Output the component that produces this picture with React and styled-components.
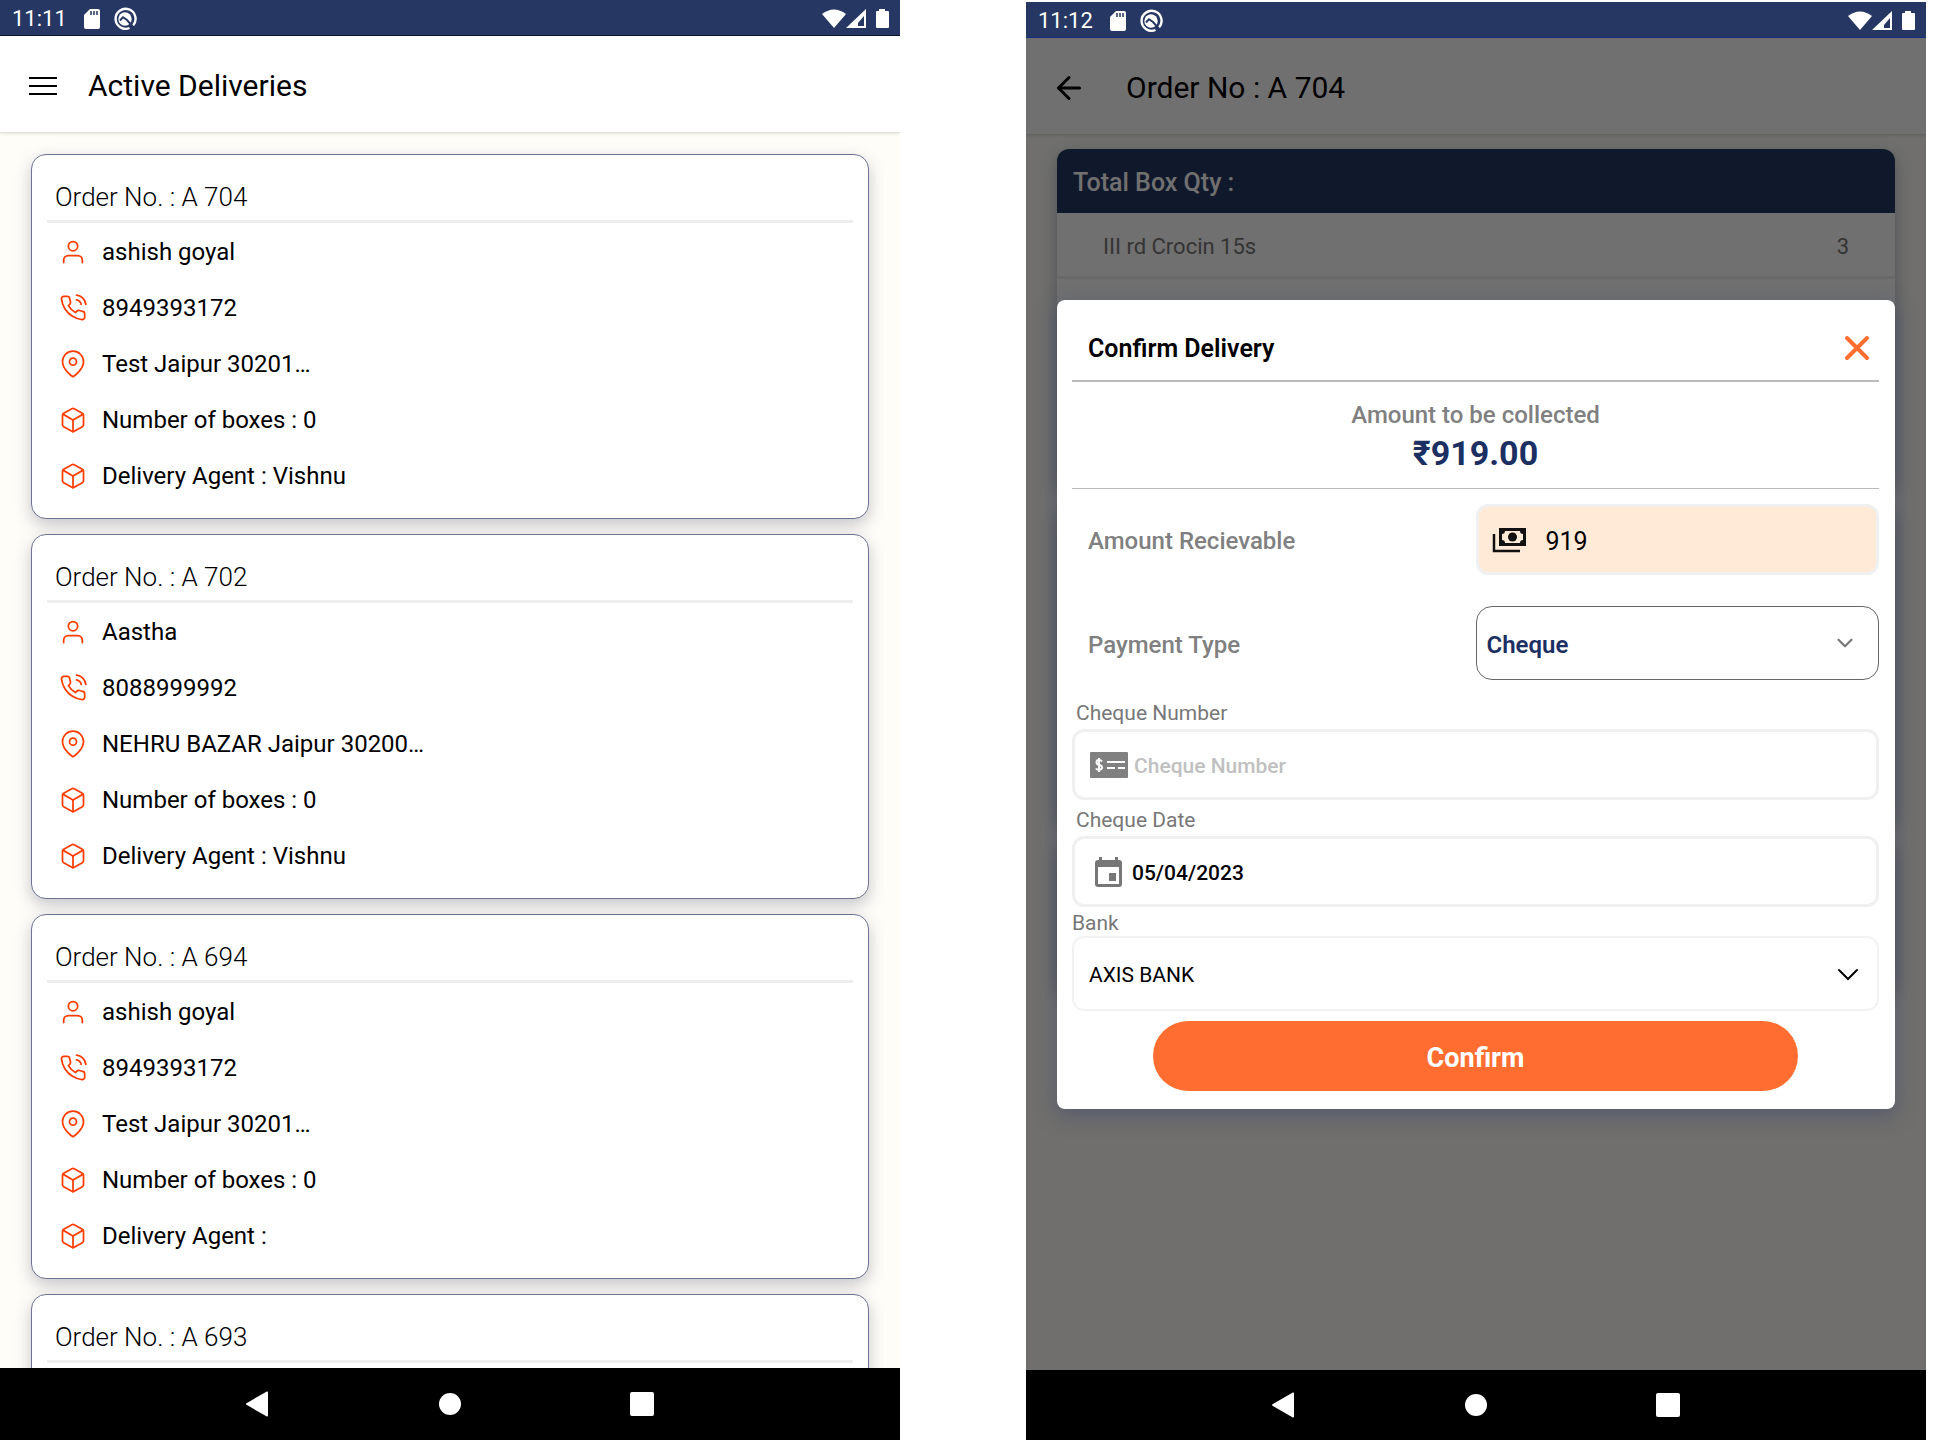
import React from "react";
import styled, { createGlobalStyle } from "styled-components";
import { FiUser, FiPhoneCall, FiMapPin, FiBox, FiArrowLeft, FiChevronDown } from "react-icons/fi";

const orders = [
    { id: "A 704", name: "ashish goyal", phone: "8949393172", address: "Test Jaipur 30201…", boxes: 0, agent: "Vishnu" },
    { id: "A 702", name: "Aastha", phone: "8088999992", address: "NEHRU BAZAR Jaipur 30200…", boxes: 0, agent: "Vishnu" },
    { id: "A 694", name: "ashish goyal", phone: "8949393172", address: "Test Jaipur 30201…", boxes: 0, agent: "" },
    { id: "A 693" },
];

const GlobalStyle = createGlobalStyle`
    * {
        box-sizing: border-box;
    }

    body {
        margin: 0;
        background: #fff;
        font-family: Roboto, "Liberation Sans", sans-serif;
        color: #000;
    }

    h1, h2, p, ul {
        margin: 0;
        padding: 0;
        font-weight: 400;
    }

    button, input, select {
        font-family: inherit;
    }
`

const Screens = styled.main`
    display: grid;
    grid-template-columns: 1fr 1fr;
    column-gap: 126px;
    padding-right: 26px;
    height: 100vh;
`

const Phone = styled.section`
    display: flex;
    flex-direction: column;
    min-width: 0;
    min-height: 0;
    margin-top: ${props => props.$top || 0}px;
`

const StatusBar = styled.div`
    display: flex;
    align-items: center;
    flex: none;
    height: 36px;
    padding: 2px 10px 0 12px;
    background: #253762;
    border-bottom: 1px solid ${props => props.$line};
    color: #fff;
    font-size: 22px;

    .icons {
        display: flex;
        align-items: center;
        gap: 11px;
        flex: 1;
        margin-left: 15px;
    }

    .signal {
        display: flex;
        align-items: center;
    }
`

const Body = styled.div`
    position: relative;
    display: flex;
    flex-direction: column;
    flex: 1;
    min-height: 0;
    overflow: hidden;
    background: #fefdf8;
`

const TopBar = styled.header`
    display: flex;
    align-items: center;
    gap: ${props => props.$gap}px;
    flex: none;
    height: 97px;
    padding: 3px ${props => props.$side}px 0;
    background: #fff;
    border-bottom: 1px solid #e4e4de;
    box-shadow: 0 1px 3px rgba(0, 0, 0, 0.1);

    h1 {
        font-size: 30px;
        font-weight: 450;
    }
`

const IconButton = styled.button`
    display: flex;
    padding: 0;
    border: 0;
    background: none;
    color: ${props => props.$color || "#000"};
`

const CardList = styled.ul`
    display: flex;
    flex-direction: column;
    gap: 15px;
    padding: 21px 31px 0;
    list-style: none;
`

const Card = styled.li`
    flex: none;
    min-height: 365px;
    padding: 0 15px 15px;
    background: #fff;
    border: 1px solid #6d7493;
    border-radius: 15px;
    box-shadow: 0 6px 16px rgba(37, 40, 70, 0.26);

    h2 {
        padding: 24px 8px 0;
        height: 68px;
        border-bottom: 3px solid #eee;
        font-size: 26px;
        line-height: 36px;
        font-weight: 350;
    }
`

const Detail = styled.p`
    display: flex;
    align-items: center;
    gap: 15px;
    height: 56px;
    padding: 2px 0 0 12px;
    font-size: 24px;
    font-weight: 370;

    svg {
        color: #ff3d00;
        stroke-width: 1.5;
    }
`

const NavBar = styled.nav`
    display: flex;
    align-items: center;
    justify-content: center;
    gap: 164px;
    flex: none;
    height: ${props => props.$height}px;
    background: #000;
`

const Sheets = styled.div`
    display: flex;
    flex-direction: column;
    gap: 16px;
    padding: 14px 31px;
`

const Sheet = styled.div`
    min-height: ${props => props.$height}px;
    background: #fff;
    border-radius: 12px;
    box-shadow: 0 6px 16px rgba(60, 70, 120, 0.4);
    overflow: hidden;

    h2 {
        height: 64px;
        padding: 0 16px;
        background: #253762;
        color: #fff;
        font-size: 25px;
        font-weight: 500;
        line-height: 68px;
    }
`

const Item = styled.p`
    display: flex;
    justify-content: space-between;
    height: 66px;
    padding: 0 46px;
    border-bottom: 3px solid #eee;
    color: #777;
    font-size: 22px;
    line-height: 68px;
`

const Overlay = styled.div`
    position: absolute;
    inset: 0;
    padding: 262px 31px 0;
    background: rgba(0, 0, 0, 0.56);
`

const Dialog = styled.form`
    padding: 0 16px 18px 15px;
    background: #fff;
    border-radius: 8px;
    box-shadow: 0 6px 20px rgba(60, 70, 110, 0.5);
`

const DialogHead = styled.div`
    display: flex;
    align-items: center;
    justify-content: space-between;
    height: 82px;
    padding: 16px 8px 0 16px;
    border-bottom: 2px solid #bbb;

    h2 {
        font-size: 25px;
        font-weight: 600;
    }
`

const Amount = styled.div`
    height: 107px;
    padding-top: 17px;
    border-bottom: 1px solid #bbb;
    color: #808080;
    font-size: 24px;
    font-weight: 500;
    line-height: 32px;
    text-align: center;

    strong {
        display: block;
        color: #1c2f63;
        font-size: 34px;
        font-weight: 700;
        line-height: 44px;
    }
`

const Row = styled.div`
    display: grid;
    grid-template-columns: 1fr 1fr;
    align-items: center;
    margin-top: ${props => props.$top}px;

    label {
        padding: 3px 0 0 16px;
        color: #808080;
        font-size: 24px;
        font-weight: 500;
    }
`

const Box = styled.div`
    display: flex;
    align-items: center;
    gap: ${props => props.$gap || 0}px;
    height: ${props => props.$height || 71}px;
    padding: ${props => props.$pad || "0 15px"};
    background: ${props => props.$fill || "#fff"};
    border: ${props => props.$border || "3px solid #f0f0f0"};
    border-radius: ${props => props.$radius || 12}px;

    svg {
        flex: none;
    }

    input, select {
        flex: 1;
        min-width: 0;
        height: 100%;
        padding: 3px 0 0;
        border: 0;
        outline: 0;
        background: none;
        appearance: none;
        color: #000;
        font-size: ${props => props.$size || 21}px;
        font-weight: ${props => props.$weight || 400};
    }

    select {
        color: ${props => props.$color || "#000"};
    }

    input::placeholder {
        color: #c0c0c0;
    }
`

const Label = styled.label`
    display: block;
    height: ${props => props.$height}px;
    padding: ${props => props.$pad};
    color: #777;
    font-size: 21px;
    line-height: 26px;
`

const Confirm = styled.button`
    display: block;
    width: 80%;
    height: 70px;
    margin: 10px auto 0;
    padding: 4px 0 0;
    border: 0;
    border-radius: 35px;
    background: #ff6e30;
    color: #fff;
    font-size: 27px;
    font-weight: 700;
`

function Status({ time, line }) {
    return <StatusBar $line={line}>
        <span>{time}</span>
        <div className="icons">
            <svg width="20" height="22" viewBox="0 0 20 22">
                <path fill="#fff" d="M8 1h8a2 2 0 0 1 2 2v16a2 2 0 0 1-2 2H4a2 2 0 0 1-2-2V7z" />
                <path stroke="#253762" strokeWidth="1.5" d="M9 3v4M12 3v4M15 3v4" />
            </svg>
            <svg width="24" height="24" viewBox="0 0 24 24" fill="none">
                <path stroke="#fff" strokeWidth="2.4" d="M20 18.500A10 10 0 1 0 16.500 21" />
                <circle cx="12" cy="12" r="6.700" fill="#fff" />
                <path stroke="#253762" strokeWidth="2" d="M7 13.500l3-3.300 4 2.800 7 8" />
            </svg>
        </div>
        <div className="signal">
            <svg width="70" height="24" viewBox="0 0 70 24">
                <path fill="#fff" d="M2 7q12-9 24 0L14 21z" />
                <path fill="#fff" fillRule="evenodd" d="M46 2v19H26zM44 9l-6 7v3h6z" />
                <path fill="#fff" d="M59 2h6v2h3a1 1 0 0 1 1 1v15a1 1 0 0 1-1 1H57a1 1 0 0 1-1-1V5a1 1 0 0 1 1-1h2z" />
            </svg>
        </div>
    </StatusBar>;
}

function AndroidNav({ height }) {
    return <NavBar $height={height}>
        <IconButton aria-label="Back" $color="#fff">
            <svg width="28" height="28" viewBox="0 0 28 28"><path fill="currentColor" d="M24 2.500v23a1 1 0 0 1-1.600.8L2.500 14.800a1 1 0 0 1 0-1.600L22.400 1.700a1 1 0 0 1 1.600.8z" /></svg>
        </IconButton>
        <IconButton aria-label="Home" $color="#fff">
            <svg width="28" height="28" viewBox="0 0 28 28"><circle cx="14" cy="14" r="11" fill="currentColor" /></svg>
        </IconButton>
        <IconButton aria-label="Recent apps" $color="#fff">
            <svg width="28" height="28" viewBox="0 0 28 28"><rect x="2" y="2" width="24" height="24" rx="2" fill="currentColor" /></svg>
        </IconButton>
    </NavBar>;
}

function OrderCard({ order }) {
    return <Card>
        <h2>Order No. : {order.id}</h2>
        {order.name && <>
            <Detail><FiUser size={28} />{order.name}</Detail>
            <Detail><FiPhoneCall size={28} />{order.phone}</Detail>
            <Detail><FiMapPin size={28} />{order.address}</Detail>
            <Detail><FiBox size={28} />Number of boxes : {order.boxes}</Detail>
            <Detail><FiBox size={28} />Delivery Agent : {order.agent}</Detail>
        </>}
    </Card>;
}

function ConfirmDelivery() {
    return <Dialog onSubmit={e => e.preventDefault()}>
        <DialogHead>
            <h2>Confirm Delivery</h2>
            <IconButton type="button" aria-label="Close" $color="#ff6e2e">
                <svg width="28" height="28" viewBox="0 0 28 28"><path stroke="currentColor" strokeWidth="4" strokeLinecap="round" d="M4 4l20 20M24 4L4 24" /></svg>
            </IconButton>
        </DialogHead>
        <Amount>
            Amount to be collected
            <strong>₹919.00</strong>
        </Amount>
        <Row $top={15}>
            <label htmlFor="amount">Amount Recievable</label>
            <Box $fill="#ffead7" $gap={20} $size={25} $pad="0 13px">
                <svg width="34" height="26" viewBox="0 0 34 26" fill="none">
                    <path stroke="#111" strokeWidth="2.500" d="M2 7v17h26" />
                    <path fill="#111" fillRule="evenodd" d="M7 1h27v18H7zM13 4a3 3 0 0 1-3 3v6a3 3 0 0 1 3 3h15a3 3 0 0 1 3-3V7a3 3 0 0 1-3-3z" />
                    <circle cx="20.500" cy="10" r="4.500" fill="#111" />
                </svg>
                <input id="amount" defaultValue="919" />
            </Box>
        </Row>
        <Row $top={31}>
            <label htmlFor="type">Payment Type</label>
            <Box $height={74} $radius={16} $border="1px solid #666" $size={24} $weight={600} $color="#1c2f63" $pad="0 20px 0 10px">
                <select id="type" defaultValue="Cheque">
                    <option>Cheque</option>
                    <option>Cash</option>
                </select>
                <FiChevronDown size={26} color="#777" />
            </Box>
        </Row>
        <Label htmlFor="number" $height={49} $pad="20px 4px 0">Cheque Number</Label>
        <Box $gap={6} $weight={500}>
            <svg width="38" height="28" viewBox="0 0 38 28">
                <rect y="1" width="38" height="26" rx="1" fill="#808080" />
                <path stroke="#fff" strokeWidth="2" fill="none" d="M17 11h18M17 17h8M28 17h7" />
                <path stroke="#fff" strokeWidth="2" fill="none" d="M12 10.500q-1-1.500-3-1.500-2.500 0-2.500 2.200T9.300 14q2.700.6 2.700 2.600T9 19q-2.200 0-3-1.600M9 7v14" />
            </svg>
            <input id="number" placeholder="Cheque Number" />
        </Box>
        <Label htmlFor="date" $height={36} $pad="7px 4px 0">Cheque Date</Label>
        <Box $gap={6} $weight={500}>
            <svg width="36" height="32" viewBox="0 0 36 32">
                <path fill="#777" fillRule="evenodd" d="M9 1h3v3h13V1h3v3h1a3 3 0 0 1 3 3v21a3 3 0 0 1-3 3H8a3 3 0 0 1-3-3V7a3 3 0 0 1 3-3h1zM8 11v17h21V11zM19 17h7v8h-7z" />
            </svg>
            <input id="date" defaultValue="05/04/2023" />
        </Box>
        <Label htmlFor="bank" $height={29} $pad="3px 0 0">Bank</Label>
        <Box $height={75} $border="2px solid #f2f2f2">
            <select id="bank" defaultValue="AXIS BANK">
                <option>AXIS BANK</option>
            </select>
            <svg width="28" height="28" viewBox="0 0 28 28" fill="none"><path stroke="#000" strokeWidth="2" strokeLinecap="round" d="M5 10l9 9 9-9" /></svg>
        </Box>
        <Confirm type="submit">Confirm</Confirm>
    </Dialog>;
}

function App() {
    return <>
        <GlobalStyle />
        <Screens>
            <Phone>
                <Status time="11:11" line="#0b1230" />
                <Body>
                    <TopBar $gap={30} $side={28}>
                        <IconButton aria-label="Menu">
                            <svg width="30" height="20" viewBox="0 0 30 20"><path stroke="currentColor" strokeWidth="2" d="M1 2h28M1 10h28M1 18h28" /></svg>
                        </IconButton>
                        <h1>Active Deliveries</h1>
                    </TopBar>
                    <CardList>
                        {orders.map(order => <OrderCard key={order.id} order={order} />)}
                    </CardList>
                </Body>
                <AndroidNav height={72} />
            </Phone>
            <Phone $top={2}>
                <Status time="11:12" line="#14307a" />
                <Body>
                    <TopBar $gap={39} $side={25}>
                        <IconButton aria-label="Back">
                            <FiArrowLeft size={36} />
                        </IconButton>
                        <h1>Order No : A 704</h1>
                    </TopBar>
                    <Sheets>
                        <Sheet $height={340}>
                            <h2>Total Box Qty :</h2>
                            <Item><span>III rd Crocin 15s</span><span>3</span></Item>
                        </Sheet>
                        <Sheet $height={318} />
                        <Sheet $height={150} />
                    </Sheets>
                    <Overlay>
                        <ConfirmDelivery />
                    </Overlay>
                </Body>
                <AndroidNav height={70} />
            </Phone>
        </Screens>
    </>;
}

export default App;
